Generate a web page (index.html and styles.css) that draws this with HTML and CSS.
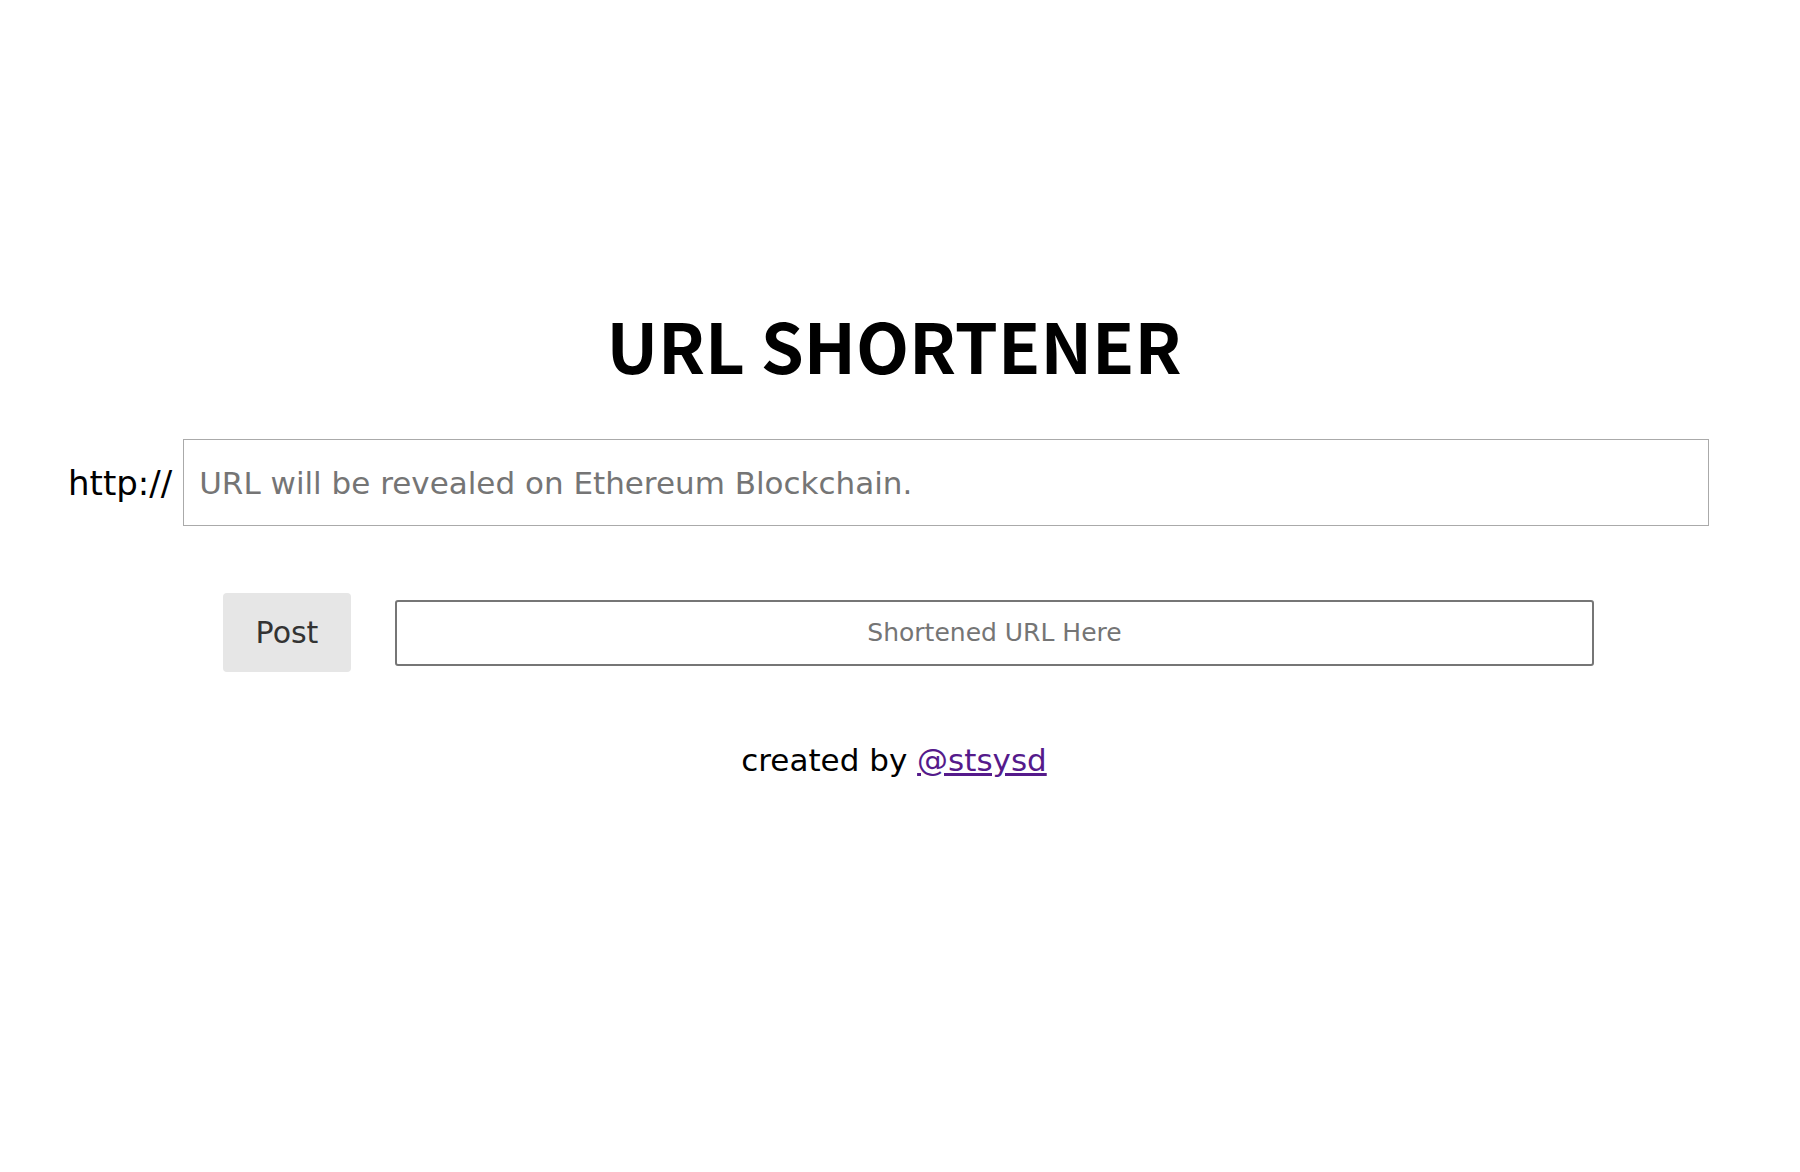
FILE: index.html
```html
<!DOCTYPE html>
<html lang="ja">
<head>
  <meta charset="UTF-8">
  <meta name="viewport" content="width=device-width, initial-scale=1.0">
  <title>URL SHORTENER</title>
  <link rel="stylesheet" href="styles.css">
</head>
<body>
  <div class="container">
    <h1 class="title">URL SHORTENER</h1>

    <div class="url-row">
      <span class="url-prefix">http://</span>
      <input class="url-input" type="text" placeholder="URL will be revealed on Ethereum Blockchain.">
    </div>

    <div class="post-row">
      <button class="post-button">Post</button>
      <input class="short-output" type="text" placeholder="Shortened URL Here" readonly>
    </div>

    <div class="footer">
      <p>created by <a href="#">@stsysd</a></p>
    </div>
  </div>
</body>
</html>
```

FILE: styles.css
```css
* {
  box-sizing: border-box;
}

body {
  margin: 0;
  background-color: #fff;
  color: #000;
  font-family: "DejaVu Sans", "Noto Sans CJK JP", sans-serif;
}

.container {
  padding-top: 304px;
}

.title {
  margin: 0 12px 55px 0;
  text-align: center;
  font-family: "Noto Sans CJK JP", "Noto Sans", sans-serif;
  font-size: 69px;
  font-weight: bold;
  line-height: 80px;
}

.url-row {
  display: flex;
  align-items: center;
  padding: 0 91px 0 68px;
}

.url-prefix {
  font-size: 34px;
  margin-right: 11px;
}

.url-input {
  flex: 1;
  height: 87px;
  padding: 0 15px;
  border: 1px solid #aaa;
  border-radius: 0;
  font-family: inherit;
  font-size: 31px;
  color: #333;
  outline: none;
}

.url-input::placeholder {
  color: #757575;
}

.post-row {
  display: flex;
  align-items: center;
  gap: 44px;
  margin-top: 67px;
  padding-left: 223px;
}

.post-button {
  width: 128px;
  height: 79px;
  border: none;
  border-radius: 4px;
  background-color: #e6e6e6;
  color: #333;
  font-family: inherit;
  font-size: 30px;
  padding: 0;
}

.short-output {
  width: 1199px;
  height: 66px;
  border: 2px solid #767676;
  border-radius: 3px;
  text-align: center;
  font-family: inherit;
  font-size: 25px;
  outline: none;
}

.short-output::placeholder {
  color: #757575;
}

.footer {
  text-align: center;
  margin: 65px 12px 0 0;
}

.footer p {
  margin: 0;
  font-size: 31px;
  line-height: 46px;
}

.footer a {
  color: #551a8b;
}
```
